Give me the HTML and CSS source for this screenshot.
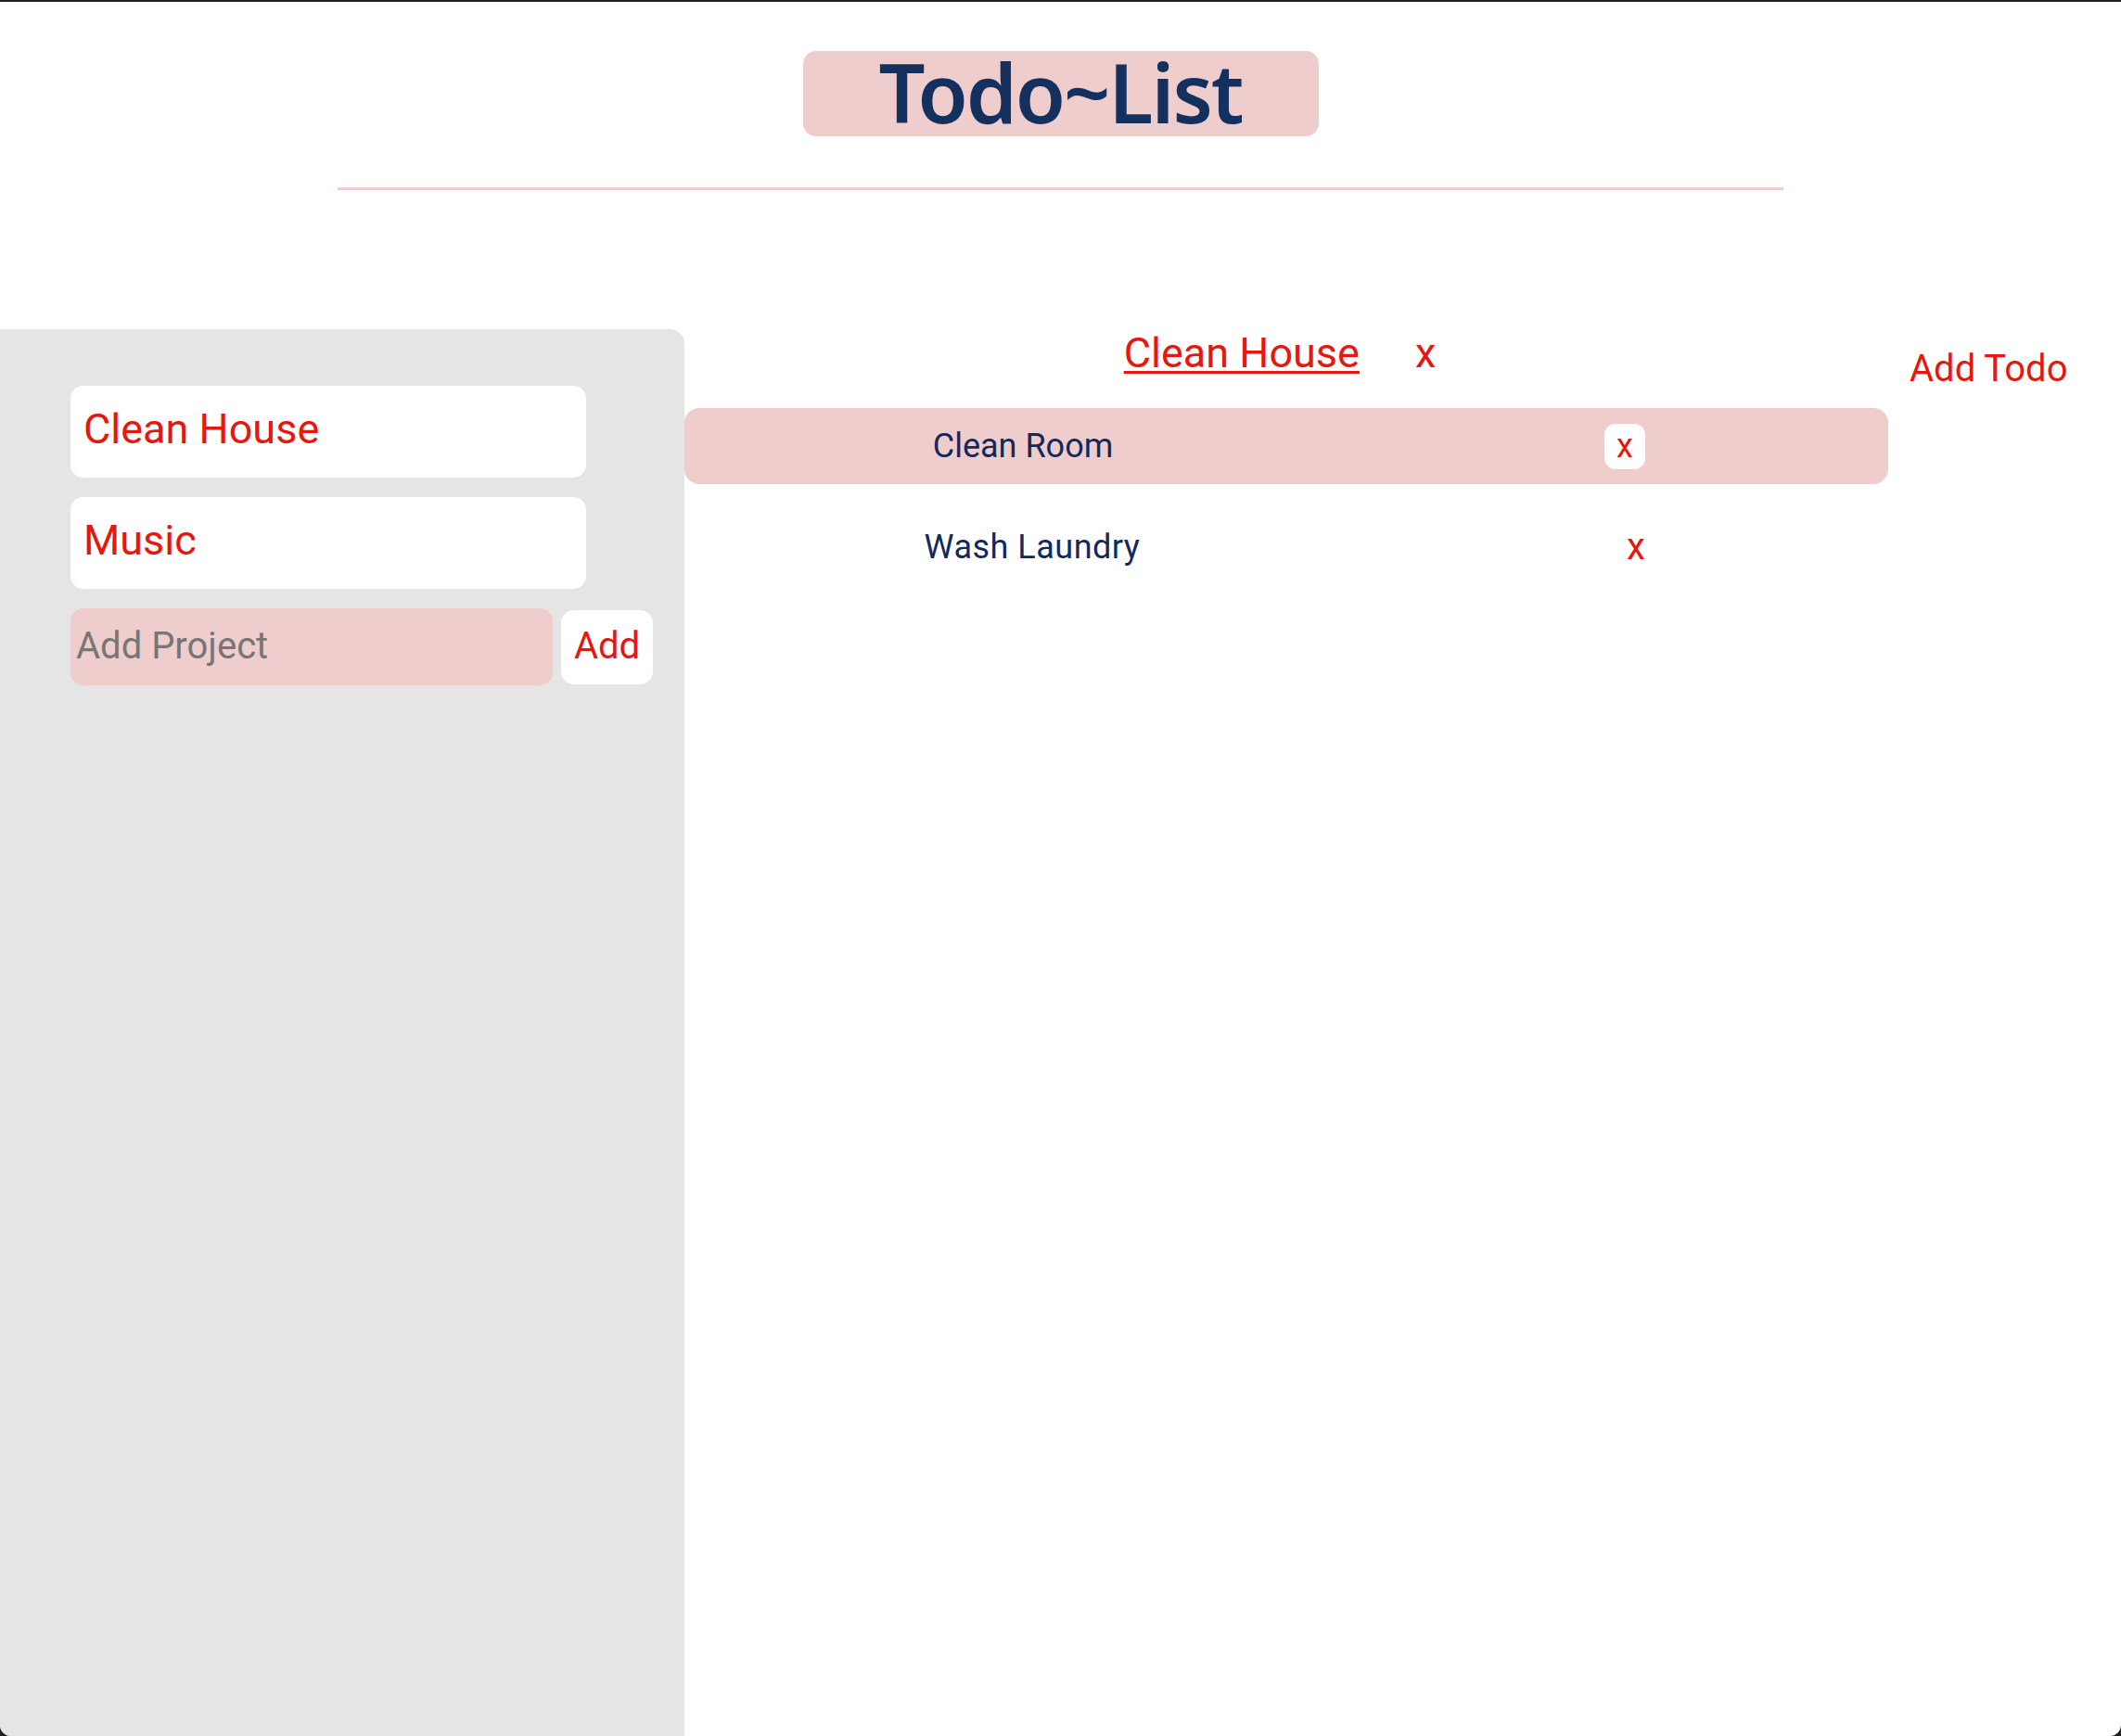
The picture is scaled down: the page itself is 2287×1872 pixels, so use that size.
FILE: index.html
```html
<!DOCTYPE html>
<html lang="en">
<head>
<meta charset="utf-8">
<title>Todo~List</title>
<link rel="stylesheet" href="styles.css">
</head>
<body>
<div class="app">
  <header class="top">
    <h1 class="title">Todo~List</h1>
    <div class="rule"></div>
  </header>
  <div class="content">
    <aside class="sidebar">
      <div class="project-card">Clean House</div>
      <div class="project-card">Music</div>
      <form class="add-project">
        <input class="project-input" type="text" placeholder="Add Project">
        <button class="add-btn" type="button">Add</button>
      </form>
    </aside>
    <main class="main">
      <section class="project">
        <div class="project-head">
          <h2 class="project-name">Clean House</h2>
          <button class="del-project" type="button">x</button>
        </div>
        <div class="todo selected">
          <span class="todo-text">Clean Room</span>
          <button class="del-todo boxed" type="button">x</button>
        </div>
        <div class="todo plain">
          <span class="todo-text">Wash Laundry</span>
          <button class="del-todo" type="button">x</button>
        </div>
      </section>
      <div class="actions">
        <button class="add-todo" type="button">Add Todo</button>
      </div>
    </main>
  </div>
</div>
</body>
</html>
```
FILE: styles.css
```css
html {
  background: #1f1f1f;
}
body {
  margin: 0;
  margin-top: 2px;
  height: 1870px;
  background: #ffffff;
  border-radius: 0 0 12px 12px;
  overflow: hidden;
  font-family: Roboto, "Liberation Sans", sans-serif;
}
.app {
  display: flex;
  flex-direction: column;
  height: 100%;
}
.top {
  display: flex;
  flex-direction: column;
  align-items: center;
  padding-top: 53px;
}
.title {
  margin: 0;
  width: 556px;
  height: 92px;
  box-sizing: border-box;
  display: flex;
  align-items: center;
  justify-content: center;
  background: #efcdcd;
  border-radius: 14px;
  color: #13305f;
  font-family: "Noto Sans", "Open Sans", sans-serif;
  font-weight: 600;
  font-size: 88px;
  letter-spacing: -2px;
  line-height: 1;
  padding-bottom: 4px;
}
.rule {
  width: 1559px;
  height: 3px;
  background: #efcdcd;
  margin-top: 55px;
}
.content {
  flex: 1;
  display: grid;
  grid-template-columns: 738px 1fr;
  margin-top: 150px;
}
.sidebar {
  background: #e5e5e5;
  border-top-right-radius: 16px;
  padding: 61px 0 0 76px;
  display: flex;
  flex-direction: column;
  gap: 21px;
}
.project-card {
  width: 556px;
  height: 99px;
  box-sizing: border-box;
  background: #ffffff;
  border-radius: 14px;
  display: flex;
  align-items: center;
  padding: 0 14px 6px;
  color: #e5170f;
  font-size: 45px;
}
.add-project {
  margin: 0;
  display: flex;
  align-items: center;
  gap: 9px;
}
.project-input {
  width: 520px;
  height: 83px;
  box-sizing: border-box;
  border: none;
  border-radius: 14px;
  background: #efcdcd;
  padding: 0 6px 3px;
  font-family: Roboto, "Liberation Sans", sans-serif;
  font-size: 40px;
  color: #333;
  outline: none;
}
.project-input::placeholder {
  color: #767676;
}
.add-btn {
  width: 99px;
  height: 80px;
  border: none;
  border-radius: 14px;
  background: #ffffff;
  color: #e5170f;
  font-family: Roboto, "Liberation Sans", sans-serif;
  font-size: 40px;
  padding: 0 0 3px;
}
.main {
  display: grid;
  grid-template-columns: 1298px 1fr;
  align-items: start;
}
.project {
  display: flex;
  flex-direction: column;
}
.project-head {
  display: flex;
  justify-content: center;
  align-items: baseline;
  gap: 60px;
  height: 54px;
  margin-top: -1px;
  margin-bottom: 32px;
  padding-right: 14px;
}
.project-name {
  margin: 0;
  font-size: 45px;
  font-weight: 400;
  line-height: 54px;
  color: #e5170f;
  text-decoration: underline;
  text-decoration-thickness: 3px;
  text-underline-offset: 4px;
}
.del-project {
  border: none;
  background: transparent;
  color: #e5170f;
  font-family: Roboto, "Liberation Sans", sans-serif;
  font-size: 45px;
  line-height: 54px;
  padding: 0;
}
.todo {
  display: grid;
  grid-template-columns: 730px 1fr;
  align-items: center;
  height: 82px;
  border-radius: 16px;
}
.todo.selected {
  background: #efcdcd;
}
.todo.plain {
  margin-top: 27px;
  padding-left: 10px;
}
.todo-text {
  justify-self: center;
  font-size: 36px;
  color: #12295c;
}
.plain .todo-text {
  letter-spacing: 0.5px;
}
.del-todo {
  justify-self: center;
  border: none;
  background: transparent;
  color: #e5170f;
  font-family: Roboto, "Liberation Sans", sans-serif;
  font-size: 40px;
  padding: 0;
  margin-left: 14px;
  line-height: 1;
}
.del-todo.boxed {
  width: 44px;
  height: 49px;
  background: #ffffff;
  border-radius: 12px;
  font-size: 36px;
  margin-left: 0;
}
.actions {
  padding-top: 19px;
}
.add-todo {
  border: none;
  background: transparent;
  color: #e5170f;
  font-family: Roboto, "Liberation Sans", sans-serif;
  font-size: 40px;
  line-height: 48px;
  padding: 0 23px;
}
```
